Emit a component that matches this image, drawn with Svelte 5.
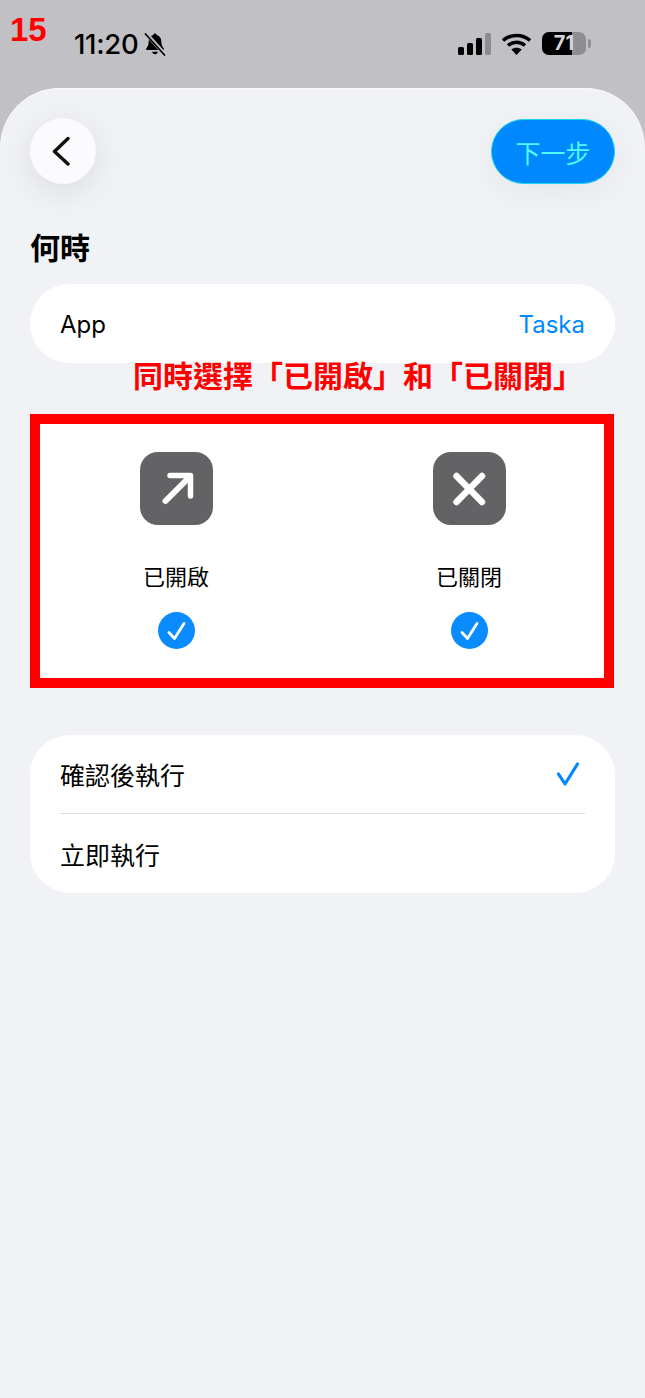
<script>
  const options = [
    { label: '已開啟', icon: 'arrow' },
    { label: '已關閉', icon: 'cross' }
  ]
</script>

<div class="screen">
  <span class="step">15</span>

  <header class="status">
    <div class="status-left">
      <span class="time">11:20</span>
      <svg class="bell" width="22" height="24" viewBox="0 0 22 24">
        <path d="M11 1.5c.9 0 1.5.6 1.6 1.4 3 .7 4.6 3.2 4.7 6.3.1 3 .6 5.200 2.400 7 .6.700.2 1.800-.8 1.800H3.100c-1 0-1.400-1.100-.8-1.800 1.800-1.800 2.300-4 2.400-7 .1-3.100 1.700-5.600 4.700-6.300.1-.8.700-1.400 1.600-1.400z" fill="#000"/>
        <path d="M8 19.800h6c-.3 1.500-1.500 2.500-3 2.500s-2.700-1-3-2.500z" fill="#000"/>
        <path d="M2 1.500 20.500 22" stroke="#c1c0c5" stroke-width="4"/>
        <path d="M1.500 2 20.500 23" stroke="#000" stroke-width="1.700" stroke-linecap="round"/>
      </svg>
    </div>
    <div class="status-right">
      <svg width="33" height="22" viewBox="0 0 33 22">
        <rect x="0" y="14" width="6" height="8" rx="1.500" fill="#000"/>
        <rect x="9" y="10" width="6" height="12" rx="1.500" fill="#000"/>
        <rect x="18" y="5" width="6" height="17" rx="1.500" fill="#000"/>
        <rect x="27" y="0" width="6" height="22" rx="1.500" fill="#8e8d91"/>
      </svg>
      <svg width="29" height="22" viewBox="0 0 29 22">
        <path d="M1 7.500C8.500.800 20.500.800 28 7.500" fill="none" stroke="#000" stroke-width="3.600"/>
        <path d="M6 12.500c5-4.300 12-4.300 17 0" fill="none" stroke="#000" stroke-width="3.600"/>
        <path d="M14.500 22 9.300 16.500c3-2.500 7.400-2.500 10.400 0z" fill="#000"/>
      </svg>
      <div class="battery">
        <div class="battery-body">
          <span class="battery-fill"></span>
          <span class="battery-text">71</span>
        </div>
        <span class="battery-cap"></span>
      </div>
    </div>
  </header>

  <main class="sheet">
    <nav class="nav">
      <button class="back" type="button" aria-label="返回">
        <svg width="20" height="30" viewBox="0 0 20 30">
          <path d="M17 2.500 3.500 15.500 17 28" fill="none" stroke="#111" stroke-width="3.400" stroke-linecap="round" stroke-linejoin="round"/>
        </svg>
      </button>
      <button class="next" type="button">下一步</button>
    </nav>

    <h2 class="title">何時</h2>

    <div class="row-card">
      <span>App</span>
      <span class="value">Taska</span>
    </div>

    <section class="picker">
      <p class="hint">同時選擇「已開啟」和「已關閉」</p>
      {#each options as option}
        <div class="option">
          <div class="tile">
            {#if option.icon === 'arrow'}
              <svg width="73" height="73" viewBox="0 0 73 73">
                <path d="M25.500 49 50 24.500" fill="none" stroke="#fff" stroke-width="6" stroke-linecap="round"/>
                <path d="M30 23.500h20.500V44" fill="none" stroke="#fff" stroke-width="5.500" stroke-linecap="round" stroke-linejoin="round"/>
              </svg>
            {:else}
              <svg width="73" height="73" viewBox="0 0 73 73">
                <path d="M23.500 24 49 50M49 24 23.500 50" fill="none" stroke="#fff" stroke-width="6.500" stroke-linecap="round"/>
              </svg>
            {/if}
          </div>
          <span class="option-label">{option.label}</span>
          <span class="tick">
            <svg width="37" height="37" viewBox="0 0 37 37">
              <path d="M11 20.500 16.500 26.500 26 11.500" fill="none" stroke="#fff" stroke-width="2.800" stroke-linecap="round" stroke-linejoin="round"/>
            </svg>
          </span>
        </div>
      {/each}
    </section>

    <div class="list-card">
      <div class="list-row">
        <span>確認後執行</span>
        <svg class="list-check" width="24" height="26" viewBox="0 0 24 26">
          <path d="M2.500 13 9 23 21.500 3" fill="none" stroke="#0088ff" stroke-width="3.200" stroke-linecap="round" stroke-linejoin="round"/>
        </svg>
      </div>
      <div class="divider"></div>
      <div class="list-row">
        <span>立即執行</span>
      </div>
    </div>
  </main>
</div>

<style>
  :global(body) {
    margin: 0;
    background: #f1f2f6;
  }

  .screen {
    position: relative;
    width: 645px;
    height: 1398px;
    overflow: hidden;
    background: #c1c0c5;
    color: #000;
    font-family: Inter, "Noto Sans CJK TC", sans-serif;
  }

  .step {
    position: absolute;
    left: 10px;
    top: 11px;
    font-family: "Liberation Sans", sans-serif;
    font-size: 33px;
    line-height: 38px;
    font-weight: 700;
    color: #ff0000;
  }

  .status {
    height: 88px;
    box-sizing: border-box;
    padding: 27px 54px 0 74px;
    display: flex;
    justify-content: space-between;
    align-items: flex-start;
  }

  .status-left {
    display: flex;
    align-items: center;
    gap: 6px;
  }

  .time {
    font-size: 27.5px;
    line-height: 34px;
    font-weight: 500;
    letter-spacing: -0.3px;
  }

  .status-right {
    display: flex;
    align-items: center;
    gap: 11px;
    padding-top: 5px;
  }

  .battery {
    display: flex;
    align-items: center;
    gap: 2px;
  }

  .battery-body {
    position: relative;
    width: 44px;
    height: 23px;
    border-radius: 7px;
    overflow: hidden;
    background: #8e8d91;
  }

  .battery-fill {
    position: absolute;
    left: 0;
    top: 0;
    bottom: 0;
    width: 30px;
    background: #000;
  }

  .battery-text {
    position: absolute;
    inset: 0;
    text-align: center;
    font-size: 20px;
    line-height: 23px;
    font-weight: 700;
    color: #d6d5d9;
  }

  .battery-cap {
    width: 3px;
    height: 9px;
    border-radius: 0 3px 3px 0;
    background: #8e8d91;
  }

  .sheet {
    height: 1310px;
    box-sizing: border-box;
    padding: 30px 30px 0;
    border-radius: 60px 60px 0 0;
    background: #f1f2f6;
    box-shadow: inset 0 1px 0 #f8f8fb;
  }

  .nav {
    display: flex;
    justify-content: space-between;
    align-items: flex-start;
  }

  .back {
    width: 66px;
    height: 66px;
    padding: 0 4px 0 0;
    border: none;
    border-radius: 50%;
    background: #fbfbfe;
    box-shadow: 0 8px 34px rgba(0, 0, 0, 0.09);
    display: flex;
    align-items: center;
    justify-content: center;
  }

  .next {
    width: 124px;
    height: 65px;
    margin-top: 1px;
    padding: 0;
    border: 1px solid #19d5ee;
    border-radius: 33px;
    background: #0088ff;
    box-shadow: 0 8px 34px rgba(0, 0, 0, 0.05);
    color: #4ffaff;
    font-family: inherit;
    font-size: 25px;
  }

  .title {
    margin: 42px 0 0;
    font-size: 30px;
    line-height: 44px;
    font-weight: 700;
  }

  .row-card {
    margin-top: 14px;
    height: 79px;
    box-sizing: border-box;
    padding: 2px 30px 0;
    border-radius: 40px;
    background: #fff;
    display: flex;
    justify-content: space-between;
    align-items: center;
    font-size: 24px;
  }

  .value {
    color: #0088ff;
  }

  .picker {
    position: relative;
    margin-top: 51px;
    width: 584px;
    height: 274px;
    box-sizing: border-box;
    padding: 28px 0 0 1px;
    border: 10px solid #ff0000;
    background: #f1f2f6;
    display: flex;
    justify-content: center;
    gap: 220px;
  }

  /* white card under the outline, its bottom corners just show */
  .picker::before {
    content: '';
    position: absolute;
    inset: 0;
    border-radius: 0 0 14px 14px / 0 0 8px 8px;
    background: #fff;
  }

  .hint {
    position: absolute;
    left: 93px;
    top: -70px;
    margin: 0;
    font-size: 30px;
    line-height: 44px;
    font-weight: 700;
    color: #ff0000;
    white-space: nowrap;
  }

  .option {
    position: relative;
    width: 73px;
    display: flex;
    flex-direction: column;
    align-items: center;
  }

  .tile {
    width: 73px;
    height: 73px;
    border-radius: 18px;
    background: #636366;
  }

  .tile svg {
    display: block;
  }

  .option-label {
    margin-top: 36px;
    font-size: 22px;
    line-height: 32px;
    white-space: nowrap;
  }

  .tick {
    margin-top: 19px;
    width: 37px;
    height: 37px;
    border-radius: 50%;
    background: #0a8cff;
  }

  .tick svg {
    display: block;
  }

  .list-card {
    margin-top: 47px;
    padding: 0 30px;
    border-radius: 40px;
    background: #fff;
    font-size: 25px;
  }

  .list-row {
    height: 78px;
    display: flex;
    justify-content: space-between;
    align-items: center;
  }

  .list-row:last-child {
    height: 79px;
  }

  .list-check {
    margin-right: 5px;
  }

  .divider {
    height: 1px;
    background: #dedee2;
  }
</style>
